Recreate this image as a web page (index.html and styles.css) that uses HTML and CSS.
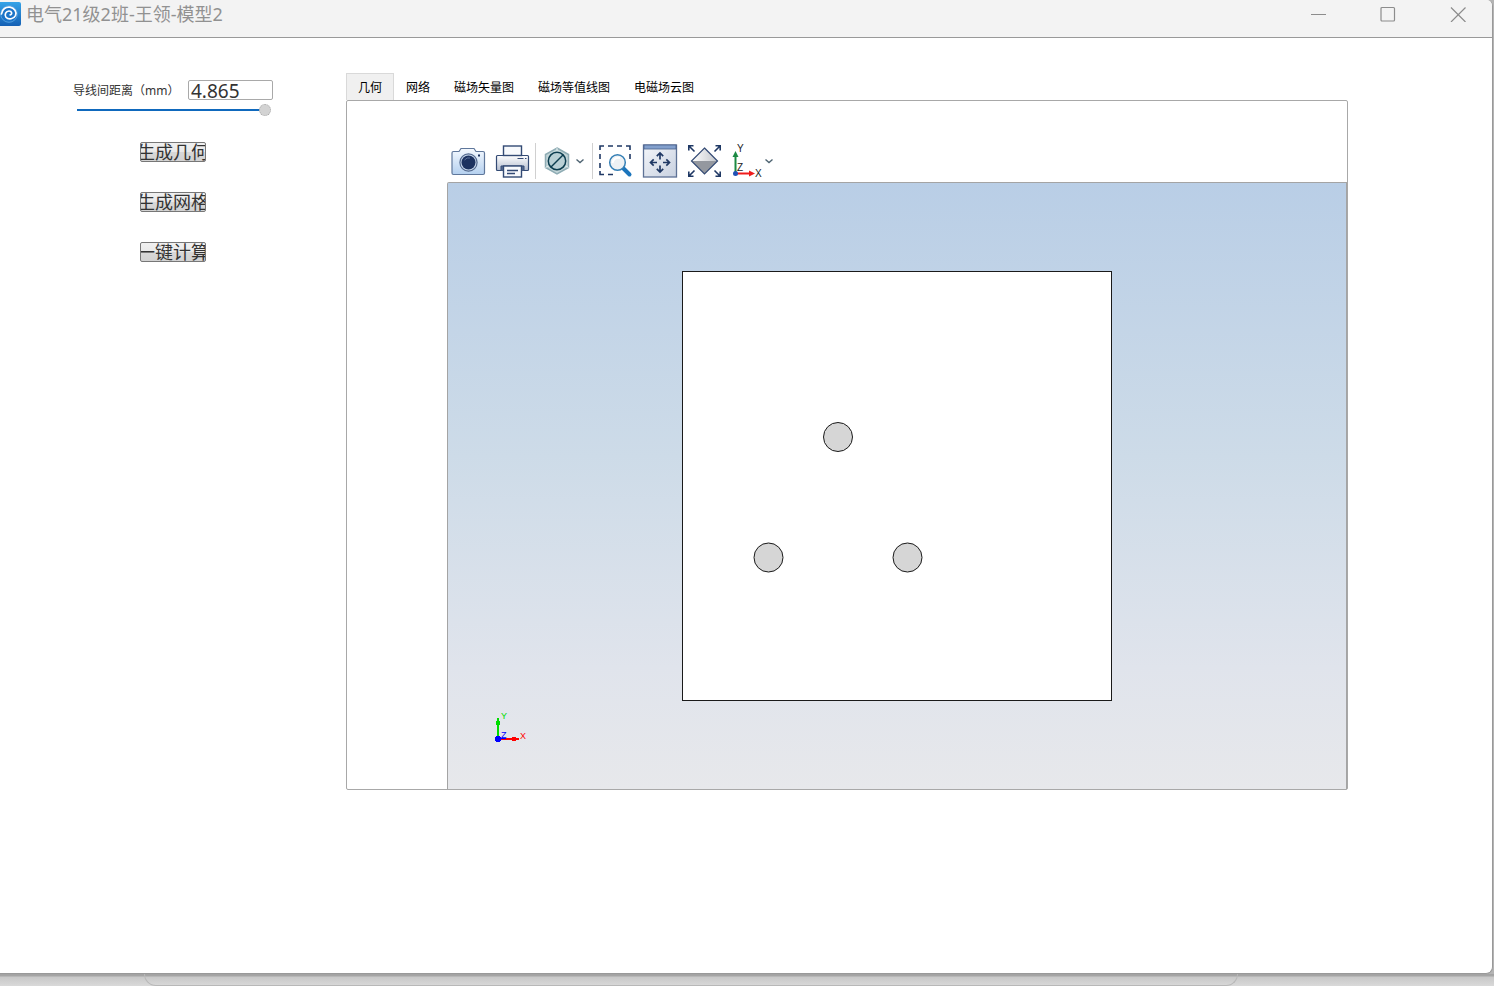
FILE: index.html
```html
<!DOCTYPE html>
<html lang="zh-CN">
<head>
<meta charset="utf-8">
<title>电气21级2班-王领-模型2</title>
<link rel="stylesheet" href="styles.css">
</head>
<body>
<div class="window">
  <header class="titlebar">
    <svg class="app-icon" viewBox="0 0 21 24" aria-hidden="true">
      <defs><linearGradient id="app" x1="0" y1="0" x2="0" y2="1"><stop offset="0" stop-color="#35a3e8"/><stop offset="1" stop-color="#1560b4"/></linearGradient></defs>
      <rect x="-3" width="24" height="24" rx="2" fill="url(#app)"/>
      <circle cx="9" cy="12" r="8.300" fill="#1c74c8" stroke="#5fa8e4" stroke-width=".8"/>
      <path d="M1.500 12C2 7 6 4.500 10 5.200C14.500 6 17 9.500 15.500 13.500C14 17 8.500 18 6 15.200C4 12.500 6 9 9 9C12 9 12.500 12.500 10.200 12.800" fill="none" stroke="#fff" stroke-width="1.700" stroke-linecap="round"/>
    </svg>
    <h1 class="title">电气21级2班-王领-模型2</h1>
    <button class="caption" aria-label="最小化"><svg viewBox="0 0 16 16"><path d="M1 8.500H16"/></svg></button>
    <button class="caption" aria-label="最大化"><svg viewBox="0 0 16 16"><rect x="1" y="1.500" width="13.500" height="13.500" rx="1"/></svg></button>
    <button class="caption" aria-label="关闭"><svg viewBox="0 0 16 16"><path d="M1 1.500L15.500 16M15.500 1.500L1 16"/></svg></button>
  </header>

  <main class="main">
    <aside class="sidebar">
      <div class="field">
        <label for="distance">导线间距离（mm）</label>
        <input class="number" id="distance" type="text" value="4.865">
      </div>
      <input class="slider" type="range" min="0" max="4.865" step="any" value="4.865" aria-label="导线间距离">
      <div class="actions">
        <button class="action"><span>生成几何</span></button>
        <button class="action"><span>生成网格</span></button>
        <button class="action"><span>一键计算</span></button>
      </div>
    </aside>

    <section class="workspace">
      <div class="tabs" role="tablist">
        <button class="tab tab-active" role="tab" aria-selected="true">几何</button>
        <button class="tab" role="tab">网络</button>
        <button class="tab" role="tab">磁场矢量图</button>
        <button class="tab" role="tab">磁场等值线图</button>
        <button class="tab" role="tab">电磁场云图</button>
      </div>
      <div class="panel">
        <div class="toolbar">
          <div class="group">
            <button class="tool" aria-label="截图">
              <svg viewBox="0 0 36 36">
                <defs><linearGradient id="cam" x1="0" y1="0" x2="0" y2="1"><stop offset="0" stop-color="#f6faff"/><stop offset="1" stop-color="#b4d0ef"/></linearGradient></defs>
                <path d="M3.500 8.500H9L11 5.500H24L26 8.500H33Q34.500 8.500 34.500 10V30Q34.500 31.500 33 31.500H3.500Q2 31.500 2 30V10Q2 8.500 3.500 8.500Z" fill="url(#cam)" stroke="#5f779b" stroke-width="1.200"/>
                <circle cx="18.500" cy="19.500" r="8.600" fill="#c8d8ec" stroke="#53698e" stroke-width="1.200"/>
                <circle cx="18.500" cy="19.500" r="7" fill="#1c3260"/>
                <path d="M14.500 17Q17 14 20 15" stroke="#5d749b" fill="none"/>
                <rect x="28" y="11.500" width="2" height="2" fill="#1c3260"/>
              </svg>
            </button>
            <button class="tool" aria-label="打印">
              <svg viewBox="0 0 36 36">
                <defs><linearGradient id="prt" x1="0" y1="0" x2="0" y2="1"><stop offset="0" stop-color="#fff"/><stop offset="1" stop-color="#b4bdcf"/></linearGradient></defs>
                <rect x="2.500" y="12.500" width="32" height="15" rx="1" fill="url(#prt)" stroke="#334a74" stroke-width="1.200"/>
                <rect x="9.500" y="3" width="18" height="9.500" fill="#f7f9fc" stroke="#334a74" stroke-width="1.400"/>
                <path d="M23.500 15.500H29.500M31 15.500H32.500" stroke="#334a74"/>
                <path d="M7 27.500V23H30V27.500" fill="#5b6f94" stroke="#334a74"/>
                <rect x="9.500" y="23" width="18" height="11" fill="#f7f9fc" stroke="#334a74" stroke-width="1.400"/>
                <path d="M13 27.500H24M13 30.500H21" stroke="#334a74" stroke-width="1.300"/>
              </svg>
            </button>
          </div>
          <span class="separator"></span>
          <button class="tool tool-wide" aria-label="透明度">
            <svg viewBox="0 0 46 36">
              <path d="M16 5L27.500 11.500V24.500L16 31L4.500 24.500V11.500Z" fill="#c2d5d8" stroke="#8facb4" stroke-width="1.500"/>
              <path d="M16 5V9M27.500 24.500L23 22M4.500 24.500L9 22" stroke="#e4eeef"/>
              <circle cx="16" cy="18" r="8.700" fill="#b9d0d5" stroke="#0c3d4f" stroke-width="1.500"/>
              <path d="M10 24L22 12" stroke="#0c3d4f" stroke-width="1.500"/>
              <path class="chevron" d="M35.500 16.500L39 19.500L42.500 16.500"/>
            </svg>
          </button>
          <span class="separator"></span>
          <div class="group">
            <button class="tool" aria-label="框选缩放">
              <svg viewBox="0 0 36 36">
                <path d="M2 7V3H6M10 3H15M19 3H24M28 3H32V7M2 11V16M2 20V25M2 28V31.500H6M10 31.500H15M32 11V16" fill="none" stroke="#1f3864" stroke-width="1.600"/>
                <path d="M25.500 25.500L31.500 31.500" stroke="#1b75bc" stroke-width="4" stroke-linecap="round"/>
                <circle cx="19.500" cy="19.500" r="7.800" fill="#edf1f4" stroke="#347fb5" stroke-width="1.500"/>
                <path d="M14.500 20Q16 14 22 15" fill="none" stroke="#fff" stroke-width="2"/>
              </svg>
            </button>
            <button class="tool" aria-label="适合窗口">
              <svg viewBox="0 0 36 36">
                <defs><linearGradient id="fit" x1="0" y1="0" x2="1" y2="1"><stop offset="0" stop-color="#f4f6fa"/><stop offset="1" stop-color="#c8d1e0"/></linearGradient></defs>
                <rect x="1.500" y="2" width="33" height="32" fill="url(#fit)" stroke="#5d7195" stroke-width="1.300"/>
                <rect x="2" y="2" width="32" height="4" fill="#83a0cd" stroke="#4a628d" stroke-width=".8"/>
                <path d="M18 10.500V16.500M18 22.500V28.500M9 19.500H15M21 19.500H27M14.800 13.200L18 10L21.200 13.200M14.800 25.800L18 29L21.200 25.800M11.700 16.300L8.500 19.500L11.700 22.700M24.300 16.300L27.500 19.500L24.300 22.700" fill="none" stroke="#1f3864" stroke-width="1.700"/>
              </svg>
            </button>
            <button class="tool" aria-label="缩放到范围">
              <svg viewBox="0 0 36 36">
                <defs><linearGradient id="dia" x1="0" y1="0" x2="1" y2="0"><stop offset="0" stop-color="#fff"/><stop offset="1" stop-color="#c2c5ca"/></linearGradient></defs>
                <path d="M18.500 5L31.500 18H5.500Z" fill="url(#dia)"/>
                <path d="M5.500 18H31.500L18.500 31Z" fill="#94989f"/>
                <path d="M18.500 5L31.500 18L18.500 31L5.500 18Z" fill="none" stroke="#334a74" stroke-width="1.200"/>
                <path d="M3 3L8.500 8.500M34 3L28.500 8.500M3 33L8.500 27.500M34 33L28.500 27.500M2.800 7.500V2.800H7.500M29.500 2.800H34.200V7.500M2.800 28.500V33.200H7.500M29.500 33.200H34.200V28.500" fill="none" stroke="#1f3864" stroke-width="1.600"/>
              </svg>
            </button>
            <button class="tool tool-wide" aria-label="视图方向">
              <svg viewBox="0 0 46 36">
                <path d="M5.500 30V13" stroke="#1d8a43" stroke-width="2"/><path d="M5.500 8L8.500 14H2.500Z" fill="#1d8a43"/>
                <path d="M6 30.500H20" stroke="#f01c1c" stroke-width="2"/><path d="M25 30.500L19 27.500V33.500Z" fill="#f01c1c"/>
                <circle cx="5.500" cy="30.500" r="2.500" fill="#2051b5"/>
                <text class="axis-label" x="7" y="9">Y</text><text class="axis-label" x="7" y="28">Z</text><text class="axis-label" x="25" y="34">X</text>
                <path class="chevron" d="M35.500 16.500L39 19.500L42.500 16.500"/>
              </svg>
            </button>
          </div>
        </div>
        <div class="viewport">
          <svg class="scene" viewBox="0 0 898 606" role="img" aria-label="几何">
            <g class="domain"><rect x="234.500" y="88.500" width="429" height="429"/></g>
            <g class="wires"><circle cx="390" cy="254" r="14.500"/><circle cx="320.500" cy="374.500" r="14.500"/><circle cx="459.500" cy="374.500" r="14.500"/></g>
            <g shape-rendering="crispEdges">
              <path d="M50 556V535" stroke="#00dc00" stroke-width="2"/><path d="M48 542V539L49 537H51L52 539V542Z" fill="#00dc00"/>
              <path d="M50 556H71" stroke="#f00" stroke-width="2"/><rect x="64" y="554" width="4" height="4" fill="#f00"/>
              <path d="M50 555.500H58" stroke="#00f"/><circle cx="50" cy="556" r="3" fill="#00f"/>
            </g>
            <text class="triad" x="53" y="536" fill="#00dc00">Y</text>
            <text class="triad" x="53" y="555" fill="#00f">Z</text>
            <text class="triad" x="72" y="556" fill="#f00">X</text>
          </svg>
        </div>
      </div>
    </section>
  </main>
</div>
<div class="desktop"><div class="behind"></div></div>
</body>
</html>
```
FILE: styles.css
```css
* { box-sizing: border-box; }

body {
  margin: 0;
  min-height: 100vh;
  display: flex;
  flex-direction: column;
  background: #b4b4b4;
  color: #333;
  font-family: "Noto Sans", "Noto Sans CJK SC", sans-serif;
  font-size: 12px;
}

button, input { font: inherit; color: inherit; padding: 0; margin: 0; }
button { border: 0; background: none; }

.window {
  flex: 1;
  display: flex;
  flex-direction: column;
  margin-right: 1px;
  background: #fff;
  border: solid #999;
  border-width: 0 1px 1px 0;
  border-radius: 0 6px 7px 0;
  overflow: hidden;
}

.titlebar {
  display: flex;
  align-items: center;
  height: 38px;
  padding: 0 18px 9px 0;
  background: #f3f3f3;
  border-bottom: 1px solid #999;
}
.app-icon { width: 21px; height: 24px; }
.title {
  flex: 1;
  margin: 0 0 0 5px;
  font-size: 18px;
  line-height: 24px;
  font-weight: 400;
  color: #919191;
}
.caption { width: 32px; height: 28px; margin-left: 38px; display: grid; place-items: center; }
.caption svg { width: 16px; height: 16px; fill: none; stroke: #8c8c8c; stroke-width: 1.2; }

.main { display: flex; padding: 35px 144px 0 0; }

.sidebar { width: 346px; flex: none; padding: 7px 73px 0; }
.field { display: flex; justify-content: space-between; line-height: 22px; height: 20px; white-space: nowrap; }
.number {
  width: 85px;
  height: 20px;
  padding: 1px 2px 0;
  border: 1px solid #a9a9a9;
  border-radius: 2px;
  background: #fff;
  font-size: 19px;
  line-height: 18px;
}

.slider {
  display: block;
  appearance: none;
  width: 194px;
  height: 12px;
  margin: 4px 0 0 4px;
  background: linear-gradient(#0f69bd, #0f69bd) 0 5px / 188px 2px no-repeat;
}
.slider::-webkit-slider-thumb {
  appearance: none;
  width: 12px;
  height: 12px;
  border: 1px dotted #aaa;
  border-radius: 50%;
  background: #d3d3d3;
}

.actions { display: flex; flex-direction: column; align-items: center; gap: 30px; padding-top: 26px; }
.action {
  display: flex;
  align-items: center;
  justify-content: center;
  width: 66px;
  height: 20px;
  border: 1px solid #777;
  border-radius: 2px;
  background: linear-gradient(#f0f0f0, #e9e9e9 50%, #d8d8d8 50%, #d2d2d2);
  font-size: 18px;
  line-height: 18px;
  white-space: nowrap;
  overflow: hidden;
}

.workspace { flex: 1; min-width: 0; }
.tabs { display: flex; height: 27px; }
.tab { padding: 2px 12px 0; border: 0; color: #000; line-height: 24px; }
.tab-active { padding: 1px 11px 0; background: #f0f0f0; border: solid #d9d9d9; border-width: 1px 1px 0; }

.panel { padding-left: 100px; border: 1px solid #a8a8a8; border-radius: 2px; }
.toolbar { display: flex; gap: 5px; padding: 42px 0 3px 3px; }
.group { display: flex; gap: 8px; }
.tool { width: 36px; height: 36px; }
.tool-wide { width: 46px; }
.tool svg { display: block; width: 100%; height: 100%; }
.separator { width: 1px; background: #d0d0d0; }
.chevron { fill: none; stroke: #4f6472; stroke-width: 1.4; }
.axis-label { font-family: "Liberation Sans", Arial, sans-serif; font-size: 10px; fill: #222; }

.viewport {
  border: solid #a4a4a4;
  border-width: 1px 1px 0;
  border-radius: 2px 0 0 0;
  background: linear-gradient(#b9cee6, #cddbe8 45%, #e0e4ec 80%, #e7e8eb);
}
.scene { display: block; width: 100%; height: auto; }
.domain { fill: #fff; stroke: #1a1a1a; }
.wires { fill: #d6d6d6; stroke: #1a1a1a; }
.triad { font-family: "Liberation Sans", Arial, sans-serif; font-size: 9px; }

.desktop {
  height: 12px;
  padding: 0 256px 0 144px;
  background: linear-gradient(#a2a2a2 0, #a6a6a6 2px, #c8c8c8 3px, #d9d9d9);
}
.behind {
  height: 12px;
  border: 1px solid #b8b8b8;
  border-top: 0;
  border-radius: 0 0 12px 12px;
}
```
